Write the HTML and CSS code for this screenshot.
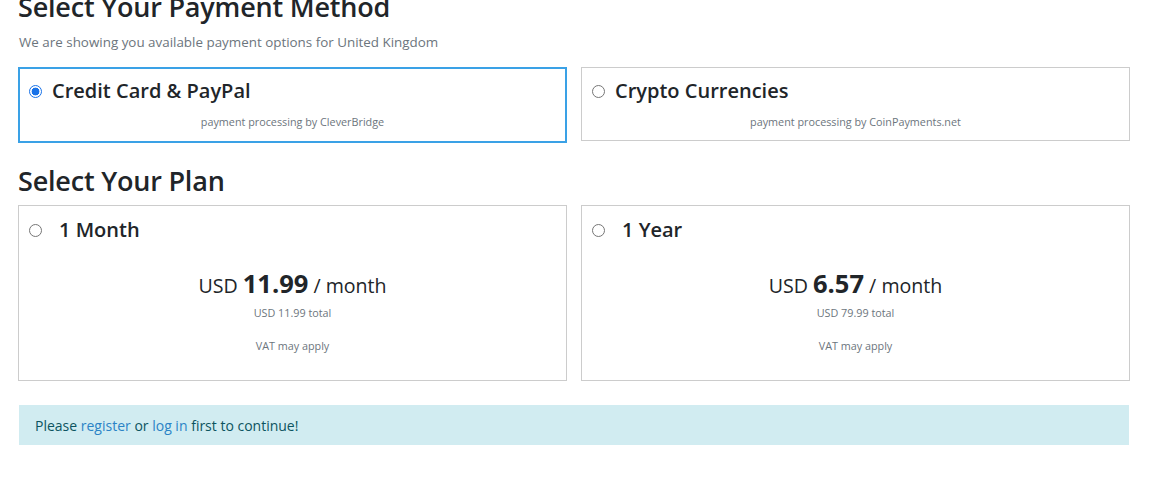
FILE: index.html
```html
<!DOCTYPE html>
<html lang="en">
<head>
<meta charset="utf-8">
<title>Select Your Payment Method</title>
<link rel="stylesheet" href="styles.css">
</head>
<body>
<main class="page">
  <h2 class="heading heading-top">Select Your Payment Method</h2>
  <p class="subtitle">We are showing you available payment options for United Kingdom</p>

  <div class="methods">
    <label class="method selected">
      <span class="title-line">
        <span class="radio checked"></span>
        <span class="method-name">Credit Card &amp; PayPal</span>
      </span>
      <span class="note">payment processing by CleverBridge</span>
    </label>
    <label class="method">
      <span class="title-line">
        <span class="radio"></span>
        <span class="method-name">Crypto Currencies</span>
      </span>
      <span class="note">payment processing by CoinPayments.net</span>
    </label>
  </div>

  <h2 class="heading heading-plan">Select Your Plan</h2>

  <div class="plans">
    <label class="plan">
      <span class="title-line plan-title">
        <span class="radio"></span>
        <span class="plan-name">1 Month</span>
      </span>
      <span class="price"><span class="cur">USD</span> <strong class="amount">11.99</strong> <span class="per">/ month</span></span>
      <span class="total">USD 11.99 total</span>
      <span class="vat">VAT may apply</span>
    </label>
    <label class="plan">
      <span class="title-line plan-title">
        <span class="radio"></span>
        <span class="plan-name">1 Year</span>
      </span>
      <span class="price"><span class="cur">USD</span> <strong class="amount">6.57</strong> <span class="per">/ month</span></span>
      <span class="total">USD 79.99 total</span>
      <span class="vat">VAT may apply</span>
    </label>
  </div>

  <div class="alert">Please <a href="#">register</a> or <a href="#">log in</a> first to continue!</div>
</main>
</body>
</html>
```

FILE: styles.css
```css
* { box-sizing: border-box; }

html, body {
  margin: 0;
  padding: 0;
  background: #fff;
}

body {
  font-family: "Open Sans", "Noto Sans", "Liberation Sans", sans-serif;
  color: #212529;
  overflow: hidden;
}

.page {
  width: 1130px;
  padding-left: 18px;
}

.heading {
  margin: 0;
  font-size: 27px;
  font-weight: 600;
  line-height: 34px;
  color: #212529;
  letter-spacing: -0.2px;
}

.heading-top {
  margin-top: -10px;
}

.subtitle {
  margin: 8px 0 0 1px;
  font-size: 13.4px;
  line-height: 20px;
  color: #6c757d;
}

.methods {
  display: grid;
  grid-template-columns: 549px 549px;
  column-gap: 14px;
  align-items: start;
  margin-top: 15px;
}

.method {
  display: flex;
  flex-direction: column;
  border: 1px solid #cccccc;
  padding: 9px 10px 10px 10px;
  cursor: pointer;
}

.method.selected {
  border: 2px solid #3aa1e6;
  padding: 8px 9px 11px 9px;
}

.title-line {
  display: flex;
  align-items: center;
  height: 28px;
}

.radio {
  flex: none;
  width: 13px;
  height: 13px;
  border: 1px solid #767676;
  border-radius: 50%;
  background: #fff;
  margin-right: 10px;
}

.radio.checked {
  border-color: #1a73e8;
  background: radial-gradient(circle, #1a73e8 0 3.6px, #fff 4.2px);
}

.method-name {
  font-size: 20px;
  font-weight: 600;
  line-height: 28px;
}

.note {
  display: block;
  margin-top: 9px;
  text-align: center;
  font-size: 10.8px;
  line-height: 16px;
  color: #6c757d;
}

.heading-plan {
  margin-top: 21px;
}

.plans {
  display: grid;
  grid-template-columns: 549px 549px;
  column-gap: 14px;
  margin-top: 7px;
}

.plan {
  display: flex;
  flex-direction: column;
  border: 1px solid #cccccc;
  padding: 10px 10px 26px 10px;
  cursor: pointer;
}

.plan .radio {
  margin-right: 17px;
}

.plan-name {
  font-size: 20px;
  font-weight: 600;
  line-height: 28px;
}

.price {
  display: block;
  margin-top: 21px;
  text-align: center;
  line-height: 36px;
  font-size: 19.6px;
}

.amount {
  font-size: 25.5px;
  font-weight: 700;
}

.total, .vat {
  display: block;
  text-align: center;
  font-size: 10.8px;
  line-height: 16px;
  color: #6c757d;
}

.total { margin-top: 1px; }
.vat { margin-top: 17px; }

.alert {
  margin: 24px 1px 0 1px;
  padding: 11px 16px 9px 16px;
  background: #d1ecf1;
  color: #0c5460;
  font-size: 14px;
  line-height: 20px;
}

.alert a {
  color: #2b83c6;
  text-decoration: none;
}
```
